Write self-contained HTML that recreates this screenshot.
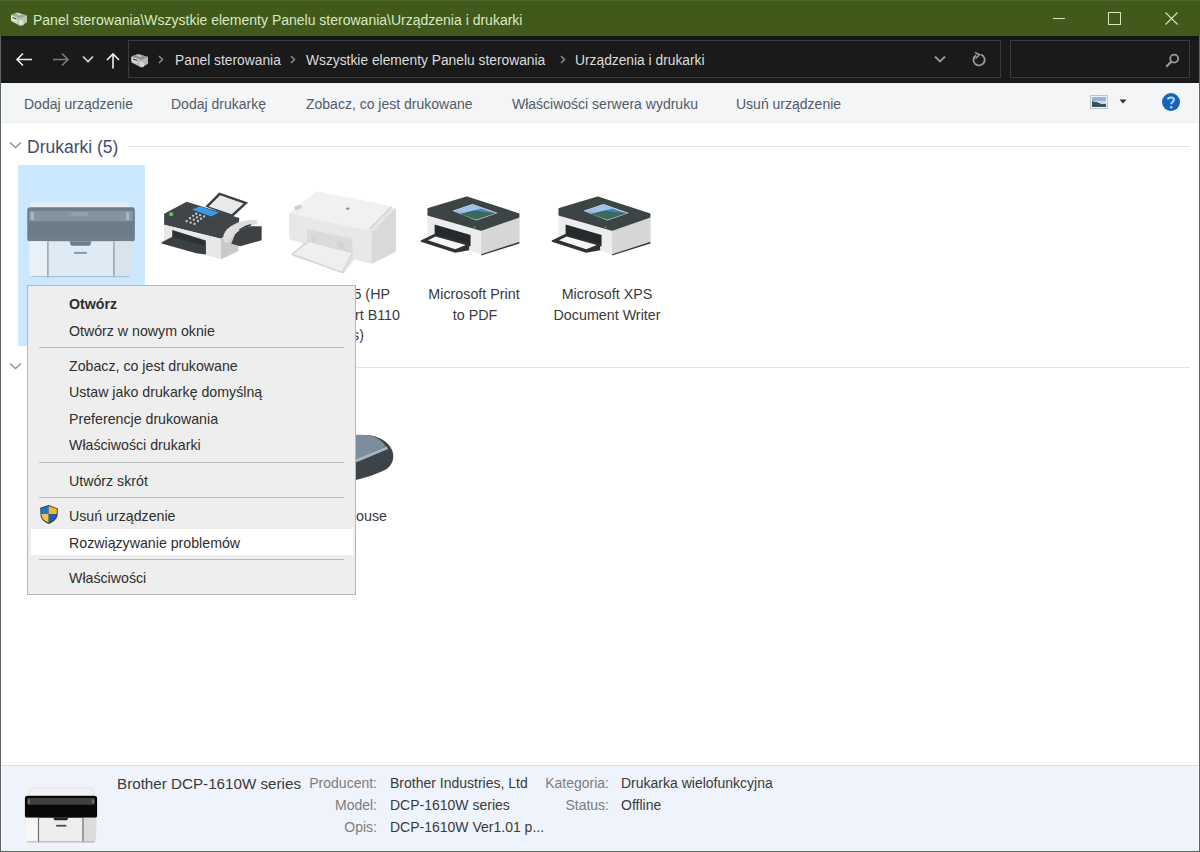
<!DOCTYPE html>
<html><head><meta charset="utf-8">
<style>
*{box-sizing:border-box;margin:0;padding:0}
html,body{width:1200px;height:852px;overflow:hidden;background:#fff}
body{position:relative;font-family:"Liberation Sans",sans-serif;}
.a{position:absolute}
svg.a{overflow:visible}
.t{position:absolute;white-space:pre;line-height:1}
#title{left:0;top:0;width:1200px;height:36px;background:#415a1c}
#nav{left:0;top:36px;width:1200px;height:47px;background:#1a1a1a;border-top:4px solid #131712}
#addr{left:128px;top:40px;width:873px;height:38px;border:1px solid #3a3a3a}
#search{left:1010px;top:40px;width:180px;height:38px;border:1px solid #3a3a3a}
#tb{left:0;top:83px;width:1200px;height:40px;background:#f4f5f7;border-bottom:1px solid #eef0f2}
#menu{left:27px;top:285px;width:329px;height:310px;background:#eeeeee;border:1px solid #b7b7b7}
#det{left:0;top:765px;width:1200px;height:87px;background:#eff3fb;border-top:1px solid #dcdfe8}
.tbt{color:#525a66;font-size:14px}
.mi{color:#2e2e2e;font-size:14.2px}
.sep{position:absolute;left:39px;width:305px;height:1px;background:#b9b9b9}
.lbl{color:#3a3a3a;font-size:14.3px}
.lc{text-align:center;width:160px}
.lr{text-align:right;width:200px}
.dk{color:#7d7d7d;font-size:14px;text-align:right;width:120px}
.dv{color:#3a3a3a;font-size:14px}
.addr{font-size:13.8px;color:#dcdcdc}
.chev{color:#8a8a8a}
</style></head><body>
<div class="a" id="title"></div>
<div class="a" style="left:0;top:0;width:1200px;height:1px;background:#4a6a2c"></div>
<!-- title icon -->
<svg class="a" style="left:5px;top:5px" width="30" height="24" viewBox="0 0 30 24">
 <path d="M6 10 L12 7.5 L22 10.5 L22 17 L15.5 21 L6 16 Z" fill="#c9d6bd"/>
 <path d="M6 10 L12 7.5 L22 10.5 L15.5 13.5 Z" fill="#9aa88e"/>
 <path d="M10.5 9 L13.5 8.3 L17.5 9.5 L14.5 10.5 Z" fill="#d4ddca"/>
 <path d="M6 10.5 L12 13 L12 17 L6 14.5 Z" fill="#e2ead8"/>
 <path d="M7.5 12.5 L11.5 14" stroke="#3e4a33" stroke-width="1.2"/>
 <path d="M12 13 L16 14 L22 11 L22 17 L15.5 21 L12 18.5 Z" fill="#b9c7ac"/>
 <path d="M14 14.5 L18.5 16 L18.5 20.5 L14 19 Z" fill="#dbe6cf"/>
</svg>
<div class="t" style="left:33px;top:13px;font-size:14px;color:#d9e8c0">Panel sterowania\Wszystkie elementy Panelu sterowania\Urządzenia i drukarki</div>
<!-- window buttons -->
<div class="a" style="left:1053px;top:18px;width:12px;height:1px;background:#d6e6bb"></div>
<div class="a" style="left:1108px;top:12px;width:13px;height:13px;border:1px solid #d6e6bb"></div>
<svg class="a" style="left:1165px;top:12px" width="13" height="13" viewBox="0 0 13 13"><path d="M0.5 0.5 L12.5 12.5 M12.5 0.5 L0.5 12.5" stroke="#d6e6bb" stroke-width="1.1"/></svg>

<div class="a" id="nav"></div>
<!-- nav arrows -->
<svg class="a" style="left:15px;top:52px" width="18" height="15" viewBox="0 0 18 15"><path d="M17 7.5 H2 M8 1.5 L2 7.5 L8 13.5" stroke="#eeeeee" stroke-width="1.6" fill="none"/></svg>
<svg class="a" style="left:52px;top:52px" width="18" height="15" viewBox="0 0 18 15"><path d="M1 7.5 H16 M10 1.5 L16 7.5 L10 13.5" stroke="#7c7c7c" stroke-width="1.6" fill="none"/></svg>
<svg class="a" style="left:82px;top:55px" width="12" height="8" viewBox="0 0 12 8"><path d="M1 1.5 L6 6.5 L11 1.5" stroke="#dddddd" stroke-width="1.6" fill="none"/></svg>
<svg class="a" style="left:105px;top:52px" width="16" height="17" viewBox="0 0 16 17"><path d="M8 16.5 V2 M2 8 L8 2 L14 8" stroke="#eeeeee" stroke-width="1.6" fill="none"/></svg>

<div class="a" id="addr"></div>
<div class="a" id="search"></div>
<!-- address icon -->
<svg class="a" style="left:126px;top:48px" width="30" height="24" viewBox="0 0 30 24">
 <path d="M5.5 8.5 L12 6 L22 9 L22 15.5 L15.5 19.5 L5.5 14.5 Z" fill="#c4c4c4"/>
 <path d="M5.5 8.5 L12 6 L22 9 L15.5 12 Z" fill="#8f8f8f"/>
 <path d="M10 7.5 L13 6.8 L17 8 L14 9 Z" fill="#c8c8c8"/>
 <path d="M5.5 9 L11.5 11.5 L11.5 15.5 L5.5 13 Z" fill="#dcdcdc"/>
 <path d="M7 11 L11 12.5" stroke="#333" stroke-width="1.2"/>
 <path d="M11.5 11.5 L15.5 12.5 L22 9.5 L22 15.5 L15.5 19.5 L11.5 17 Z" fill="#b5b5b5"/>
 <path d="M13.5 13 L18 14.5 L18 19 L13.5 17.5 Z" fill="#d2d2d2"/>
</svg>
<svg class="a" style="left:158px;top:55px" width="6" height="9" viewBox="0 0 6 9"><path d="M1 1 L4.5 4.5 L1 8" stroke="#8a8a8a" stroke-width="1.5" fill="none"/></svg>
<div class="t addr" style="left:175px;top:54px">Panel sterowania</div>
<svg class="a" style="left:290px;top:55px" width="6" height="9" viewBox="0 0 6 9"><path d="M1 1 L4.5 4.5 L1 8" stroke="#8a8a8a" stroke-width="1.5" fill="none"/></svg>
<div class="t addr" style="left:306px;top:54px">Wszystkie elementy Panelu sterowania</div>
<svg class="a" style="left:560px;top:55px" width="6" height="9" viewBox="0 0 6 9"><path d="M1 1 L4.5 4.5 L1 8" stroke="#8a8a8a" stroke-width="1.5" fill="none"/></svg>
<div class="t addr" style="left:575px;top:54px">Urządzenia i drukarki</div>
<svg class="a" style="left:934px;top:55px" width="12" height="9" viewBox="0 0 12 9"><path d="M1 1.5 L6 6.5 L11 1.5" stroke="#9a9a9a" stroke-width="1.8" fill="none"/></svg>
<svg class="a" style="left:972px;top:52px" width="16" height="15" viewBox="0 0 16 15"><path d="M4 3.2 A5.6 5.6 0 1 0 9 2.6" stroke="#9a9a9a" stroke-width="1.8" fill="none"/><path d="M3 0.5 L7.5 2.8 L3.5 6.5" stroke="#9a9a9a" stroke-width="1.6" fill="none"/></svg>
<svg class="a" style="left:1165px;top:53px" width="15" height="15" viewBox="0 0 15 15"><circle cx="9.2" cy="5.6" r="4" stroke="#9a9a9a" stroke-width="1.8" fill="none"/><path d="M6.3 8.6 L1.2 13.7" stroke="#9a9a9a" stroke-width="2.2"/></svg>

<div class="a" id="tb"></div>
<div class="t tbt" style="left:24px;top:97px">Dodaj urządzenie</div>
<div class="t tbt" style="left:171px;top:97px">Dodaj drukarkę</div>
<div class="t tbt" style="left:306px;top:97px">Zobacz, co jest drukowane</div>
<div class="t tbt" style="left:512px;top:97px">Właściwości serwera wydruku</div>
<div class="t tbt" style="left:736px;top:97px">Usuń urządzenie</div>
<!-- view icon -->
<svg class="a" style="left:1090px;top:95px" width="18" height="14" viewBox="0 0 18 14">
 <rect x="0.5" y="0.5" width="17" height="13" fill="#eef4f8" stroke="#b9c6d0"/>
 <rect x="2" y="2" width="14" height="4" fill="#8fb6dc"/>
 <path d="M2 6 L7 7 L12 9 L16 9 L16 12 L2 12 Z" fill="#3f5058"/>
 <path d="M2 6 L16 6 L16 9 L12 9 L7 7 Z" fill="#c7d9e6"/>
</svg>
<svg class="a" style="left:1119px;top:99px" width="8" height="5" viewBox="0 0 8 5"><path d="M0.5 0.5 L7.5 0.5 L4 4.5 Z" fill="#333"/></svg>
<svg class="a" style="left:1161px;top:92px" width="20" height="20" viewBox="0 0 20 20">
 <circle cx="10" cy="10" r="9" fill="#1763b6"/>
 <path d="M7 7.5 C7 4.8 13 4.6 13 7.6 C13 9.6 10.2 9.8 10.2 12.3" stroke="#b3dbf7" stroke-width="2" fill="none"/>
 <circle cx="10.2" cy="15.2" r="1.2" fill="#b3dbf7"/>
</svg>

<!-- group header -->
<svg class="a" style="left:9px;top:141px" width="13" height="8" viewBox="0 0 13 8"><path d="M1 1.5 L6.5 6.5 L12 1.5" stroke="#8a8f98" stroke-width="1.4" fill="none"/></svg>
<div class="t" style="left:27px;top:139px;font-size:17.5px;color:#454b70">Drukarki (5)</div>
<div class="a" style="left:128px;top:146px;width:1062px;height:1px;background:#e3e3e3"></div>
<div class="a" style="left:18px;top:165px;width:127px;height:181px;background:#cce8ff"></div>

<!-- Brother printer icon (tinted) -->
<svg class="a" style="left:20px;top:190px" width="120" height="95" viewBox="0 0 1076 852">
 <rect x="90" y="110" width="895" height="70" rx="30" fill="#e3edf6"/>
 <rect x="65" y="155" width="965" height="308" rx="28" fill="#6c7c89"/>
 <rect x="80" y="185" width="935" height="95" rx="10" fill="#8494a1"/>
 <rect x="95" y="200" width="30" height="70" fill="#a9b7c2"/>
 <rect x="950" y="200" width="30" height="70" fill="#a9b7c2"/>
 <path d="M470 200 L600 200 L620 230 L450 230 Z" fill="#93a2ae"/>
 <rect x="75" y="400" width="935" height="62" fill="#6f7f8c"/>
 <path d="M75 460 L1010 460 L1005 760 Q1000 785 970 785 L110 785 Q85 785 85 760 Z" fill="#deeaf4"/>
 <path d="M85 460 L245 460 L245 785 L110 785 Q85 785 85 760 Z" fill="#e8f1f8"/>
 <path d="M845 460 L1010 460 L1005 760 Q1000 785 970 785 L845 785 Z" fill="#d7e3ed"/>
 <rect x="243" y="462" width="14" height="323" fill="#9aa9b5"/>
 <rect x="835" y="462" width="14" height="323" fill="#9aa9b5"/>
 <path d="M445 460 L640 460 L632 492 Q627 500 617 500 L468 500 Q458 500 453 492 Z" fill="#6c7c89"/>
 <rect x="485" y="555" width="115" height="18" fill="#8d9aa5"/>
 <rect x="100" y="772" width="880" height="10" fill="#aebbc6"/>
</svg>
<!-- Fax icon -->
<svg class="a" style="left:155px;top:185px" width="115" height="80" viewBox="0 0 1200 835">
 <path d="M525 225 L670 78 L972 182 L810 335 Z" fill="#3a3f42"/>
 <path d="M560 225 L680 108 L925 192 L800 305 Z" fill="#e9e9e9"/>
 <path d="M95 300 L330 175 L880 345 L875 400 L690 560 L95 415 Z" fill="#3f4548"/>
 <path d="M95 415 L690 560 L870 480 L870 690 L690 775 L95 610 Z" fill="#e8e8e8"/>
 <path d="M690 560 L870 480 L870 690 L690 775 Z" fill="#c9c9c9"/>
 <path d="M180 470 L530 580 L530 720 L180 610 Z" fill="#2d3133"/>
 <path d="M70 598 L180 540 L530 640 L530 725 L430 712 L70 610 Z" fill="#3a3f42"/>
 <path d="M796 613 L870 431 L1113 431 L1113 576 L891 640 Z" fill="#3c4245"/>
 <path d="M715 525 C725 495 740 475 749 464 C800 420 850 395 891 384 C960 368 1010 362 1046 365 C1065 372 1072 380 1070 387 L1066 404 C1040 412 1010 420 978 431 C940 445 905 460 877 478 C840 505 815 535 796 559 C780 580 765 600 749 606 C730 600 718 592 715 570 Z" fill="#dedede"/>
 <path d="M880 470 C920 440 960 425 1000 415" stroke="#2a2e30" stroke-width="14" fill="none"/>
 <path d="M385 255 L470 222 L665 290 L585 328 Z" fill="#3a9be6"/>
 <circle cx="168" cy="305" r="22" fill="#5fc45a"/>
 <g fill="#c8cdd0">
  <circle cx="430" cy="300" r="12"/><circle cx="470" cy="315" r="12"/><circle cx="512" cy="328" r="12"/>
  <circle cx="398" cy="322" r="12"/><circle cx="438" cy="338" r="12"/><circle cx="480" cy="352" r="12"/>
  <circle cx="365" cy="347" r="12"/><circle cx="405" cy="362" r="12"/><circle cx="448" cy="376" r="12"/>
  <circle cx="330" cy="378" r="12"/><circle cx="372" cy="393" r="12"/><circle cx="412" cy="407" r="12"/>
 </g>
</svg>

<!-- HP printer icon -->
<svg class="a" style="left:280px;top:185px" width="125" height="95" viewBox="0 0 1121 852">
 <g stroke-linejoin="round">
 <path d="M95 265 L335 75 L1025 225 L1025 590 L820 690 L660 650 L565 775 L120 625 L235 515 L100 475 Z" fill="#e4e4e4" stroke="#e4e4e4" stroke-width="30"/>
 <path d="M95 255 L335 70 L1000 200 L805 400 Z" fill="#f1f1f1" stroke="#f1f1f1" stroke-width="24"/>
 <path d="M90 262 L830 438 L830 695 L660 655 L650 485 L240 395 L240 505 L95 475 Z" fill="#e8e8e8" stroke="#e8e8e8" stroke-width="16"/>
 <path d="M830 438 L1030 230 L1030 592 L830 695 Z" fill="#d9d9d9" stroke="#d9d9d9" stroke-width="16"/>
 <path d="M240 392 L650 482 L650 610 L240 515 Z" fill="#dbdbdb"/>
 <path d="M280 450 L330 460 L330 520 L280 510 Z" fill="#d3d3d3"/>
 <path d="M520 505 L580 520 L580 580 L520 565 Z" fill="#d3d3d3"/>
 <path d="M110 620 L255 505 L650 605 L560 785 Z" fill="#efefef" stroke="#d8d8d8" stroke-width="14"/>
 <path d="M800 398 L1000 198" stroke="#d2d2d2" stroke-width="14"/>
 </g>
 <ellipse cx="608" cy="212" rx="16" ry="10" fill="#8a8a8a"/>
 <path d="M125 195 L185 175 L200 205 L140 228 Z" fill="#cfcfcf"/>
</svg>
<!-- PDF printer icon -->
<svg class="a" style="left:415px;top:188px" width="115" height="74" viewBox="0 0 1200 772">
 <path d="M130 280 L690 440 L1090 300 L1090 560 L690 690 L130 520 Z" fill="#ececec"/>
 <path d="M690 440 L1090 300 L1090 560 L690 690 Z" fill="#d6d6d6"/>
 <path d="M690 690 L1090 560 L1090 580 L690 705 Z" fill="#3a3a3a"/>
 <path d="M140 218 L540 97 L1080 272 L1080 300 L690 437 L140 280 Z" fill="#3d4446" stroke="#3d4446" stroke-width="20" stroke-linejoin="round"/>
 <path d="M205 380 L580 490 L580 610 L205 490 Z" fill="#262a2c"/>
 <path d="M60 548 L200 480 L565 580 L565 650 L420 675 L60 562 Z" fill="#2e3234"/>
 <path d="M135 545 L215 505 L530 595 L420 640 Z" fill="#f6f6f6"/>
 <path d="M390 238 L600 168 L865 262 L640 338 Z" fill="#c9d6e0"/><path d="M420 240 L600 180 L830 262 L640 325 Z" fill="#4d83c6"/>
 <path d="M470 270 L600 230 L720 250 L850 262 L640 330 Z" fill="#3b6a5c"/>
 <path d="M420 240 L600 180 L700 215 L500 260 Z" fill="#9cc3ea"/>
 <circle cx="622" cy="410" r="10" fill="#45b04a"/>
</svg>
<!-- XPS printer icon -->
<svg class="a" style="left:546px;top:188px" width="115" height="74" viewBox="0 0 1200 772">
 <path d="M130 280 L690 440 L1090 300 L1090 560 L690 690 L130 520 Z" fill="#ececec"/>
 <path d="M690 440 L1090 300 L1090 560 L690 690 Z" fill="#d6d6d6"/>
 <path d="M690 690 L1090 560 L1090 580 L690 705 Z" fill="#3a3a3a"/>
 <path d="M140 218 L540 97 L1080 272 L1080 300 L690 437 L140 280 Z" fill="#3d4446" stroke="#3d4446" stroke-width="20" stroke-linejoin="round"/>
 <path d="M205 380 L580 490 L580 610 L205 490 Z" fill="#262a2c"/>
 <path d="M60 548 L200 480 L565 580 L565 650 L420 675 L60 562 Z" fill="#2e3234"/>
 <path d="M135 545 L215 505 L530 595 L420 640 Z" fill="#f6f6f6"/>
 <path d="M390 238 L600 168 L865 262 L640 338 Z" fill="#c9d6e0"/><path d="M420 240 L600 180 L830 262 L640 325 Z" fill="#4d83c6"/>
 <path d="M470 270 L600 230 L720 250 L850 262 L640 330 Z" fill="#3b6a5c"/>
 <path d="M420 240 L600 180 L700 215 L500 260 Z" fill="#9cc3ea"/>
 <circle cx="622" cy="410" r="10" fill="#45b04a"/>
</svg>

<div class="t lbl lr" style="left:190px;top:287px">192.168.0.105 (HP</div>
<div class="t lbl lr" style="left:200px;top:308px">Photosmart B110</div>
<div class="t lbl lr" style="left:164px;top:328px">series)</div>
<div class="t lbl lc" style="left:394px;top:287px">Microsoft Print</div>
<div class="t lbl lc" style="left:395px;top:308px">to PDF</div>
<div class="t lbl lc" style="left:527px;top:287px">Microsoft XPS</div>
<div class="t lbl lc" style="left:527px;top:308px">Document Writer</div>

<!-- second group -->
<svg class="a" style="left:9px;top:362px" width="13" height="8" viewBox="0 0 13 8"><path d="M1 1.5 L6.5 6.5 L12 1.5" stroke="#8a8f98" stroke-width="1.4" fill="none"/></svg>
<div class="a" style="left:128px;top:367px;width:1062px;height:1px;background:#e3e3e3"></div>
<!-- mouse -->
<svg class="a" style="left:340px;top:410px" width="80" height="130" viewBox="0 0 524 852">
 <path d="M60 180 C150 150 260 160 320 230 C370 290 350 360 300 390 C220 430 120 460 40 470 Z" fill="#3c4449"/>
 <path d="M60 175 C150 150 250 160 300 240 L100 330 L40 340 Z" fill="#7d8d9b"/>
 <path d="M40 340 L100 325 L305 240 L315 255 L100 345 L40 360 Z" fill="#a9b6c0"/>
</svg>
<div class="t lbl lr" style="left:187px;top:509px">Wireless Mouse</div>

<!-- context menu -->
<div class="a" id="menu"></div>
<div class="t mi" style="left:69px;top:297px;font-weight:700">Otwórz</div>
<div class="t mi" style="left:69px;top:324px">Otwórz w nowym oknie</div>
<div class="sep" style="top:347px"></div>
<div class="t mi" style="left:69px;top:359px">Zobacz, co jest drukowane</div>
<div class="t mi" style="left:69px;top:385px">Ustaw jako drukarkę domyślną</div>
<div class="t mi" style="left:69px;top:412px">Preferencje drukowania</div>
<div class="t mi" style="left:69px;top:438px">Właściwości drukarki</div>
<div class="sep" style="top:462px"></div>
<div class="t mi" style="left:69px;top:474px">Utwórz skrót</div>
<div class="sep" style="top:497px"></div>
<svg class="a" style="left:39px;top:504px" width="21" height="21" viewBox="0 0 21 21">
 <path d="M1.2 3.7 L9.7 1 L18.9 4.5 L18.6 11 C18.2 15 14.5 18 9.7 20 C5.5 18 1.8 15.5 1.5 11 Z" fill="#3b3a30"/>
 <path d="M2.2 4.4 L9.7 2 L9.7 10.1 L2.3 10.1 Z" fill="#1b78d2"/>
 <path d="M9.7 2 L17.9 5.1 L17.7 10.1 L9.7 10.1 Z" fill="#f6b62e"/>
 <path d="M2.3 10.1 L9.7 10.1 L9.7 18.8 C6 17 2.8 14.8 2.5 11 Z" fill="#efc453"/>
 <path d="M9.7 10.1 L17.7 10.1 L17.6 11 C17.2 14.5 14 17 9.7 18.8 Z" fill="#1e5fb3"/>
</svg>
<div class="t mi" style="left:69px;top:509px">Usuń urządzenie</div>
<div class="a" style="left:31px;top:529px;width:322px;height:26px;background:#ffffff"></div>
<div class="t mi" style="left:69px;top:536px">Rozwiązywanie problemów</div>
<div class="sep" style="top:559px"></div>
<div class="t mi" style="left:69px;top:571px">Właściwości</div>

<!-- details pane -->
<div class="a" id="det"></div>
<svg class="a" style="left:10px;top:770px" width="100" height="82" viewBox="0 0 1039 852">
 <rect x="195" y="190" width="670" height="100" rx="30" fill="#f2f2f2" stroke="#dedede" stroke-width="8"/>
 <rect x="155" y="268" width="750" height="232" rx="30" fill="#080808"/>
 <rect x="180" y="290" width="700" height="70" rx="12" fill="#3f3f3f"/>
 <rect x="185" y="305" width="20" height="45" fill="#777"/>
 <rect x="855" y="305" width="20" height="45" fill="#777"/>
 <path d="M160 495 L900 495 L892 730 Q888 752 865 752 L195 752 Q172 752 170 730 Z" fill="#ededed"/>
 <path d="M165 495 L295 495 L295 752 L195 752 Q172 752 170 730 Z" fill="#f7f7f7"/>
 <path d="M760 495 L900 495 L892 730 Q888 752 865 752 L760 752 Z" fill="#dcdcdc"/>
 <rect x="290" y="495" width="12" height="257" fill="#6a6a6a"/>
 <rect x="752" y="495" width="12" height="257" fill="#6a6a6a"/>
 <path d="M450 495 L605 495 L598 515 Q594 522 585 522 L470 522 Q461 522 457 515 Z" fill="#222"/>
 <rect x="480" y="570" width="105" height="18" fill="#444"/>
 <rect x="180" y="740" width="700" height="12" fill="#b5b5b5"/>
</svg>
<div class="t dv" style="left:117px;top:776px;font-size:15.2px">Brother DCP-1610W series</div>
<div class="t dk" style="left:257px;top:776px">Producent:</div>
<div class="t dk" style="left:257px;top:798px">Model:</div>
<div class="t dk" style="left:257px;top:820px">Opis:</div>
<div class="t dv" style="left:390px;top:776px">Brother Industries, Ltd</div>
<div class="t dv" style="left:390px;top:798px">DCP-1610W series</div>
<div class="t dv" style="left:390px;top:820px">DCP-1610W Ver1.01 p...</div>
<div class="t dk" style="left:489px;top:776px">Kategoria:</div>
<div class="t dk" style="left:489px;top:798px">Status:</div>
<div class="t dv" style="left:621px;top:776px">Drukarka wielofunkcyjna</div>
<div class="t dv" style="left:621px;top:798px">Offline</div>

<!-- window borders -->
<div class="a" style="left:0;top:36px;width:1px;height:816px;background:#5e6661"></div>
<div class="a" style="left:1199px;top:36px;width:1px;height:816px;background:#5e6661"></div>
<div class="a" style="left:0;top:851px;width:1200px;height:1px;background:#5b6a52"></div>
</body></html>
